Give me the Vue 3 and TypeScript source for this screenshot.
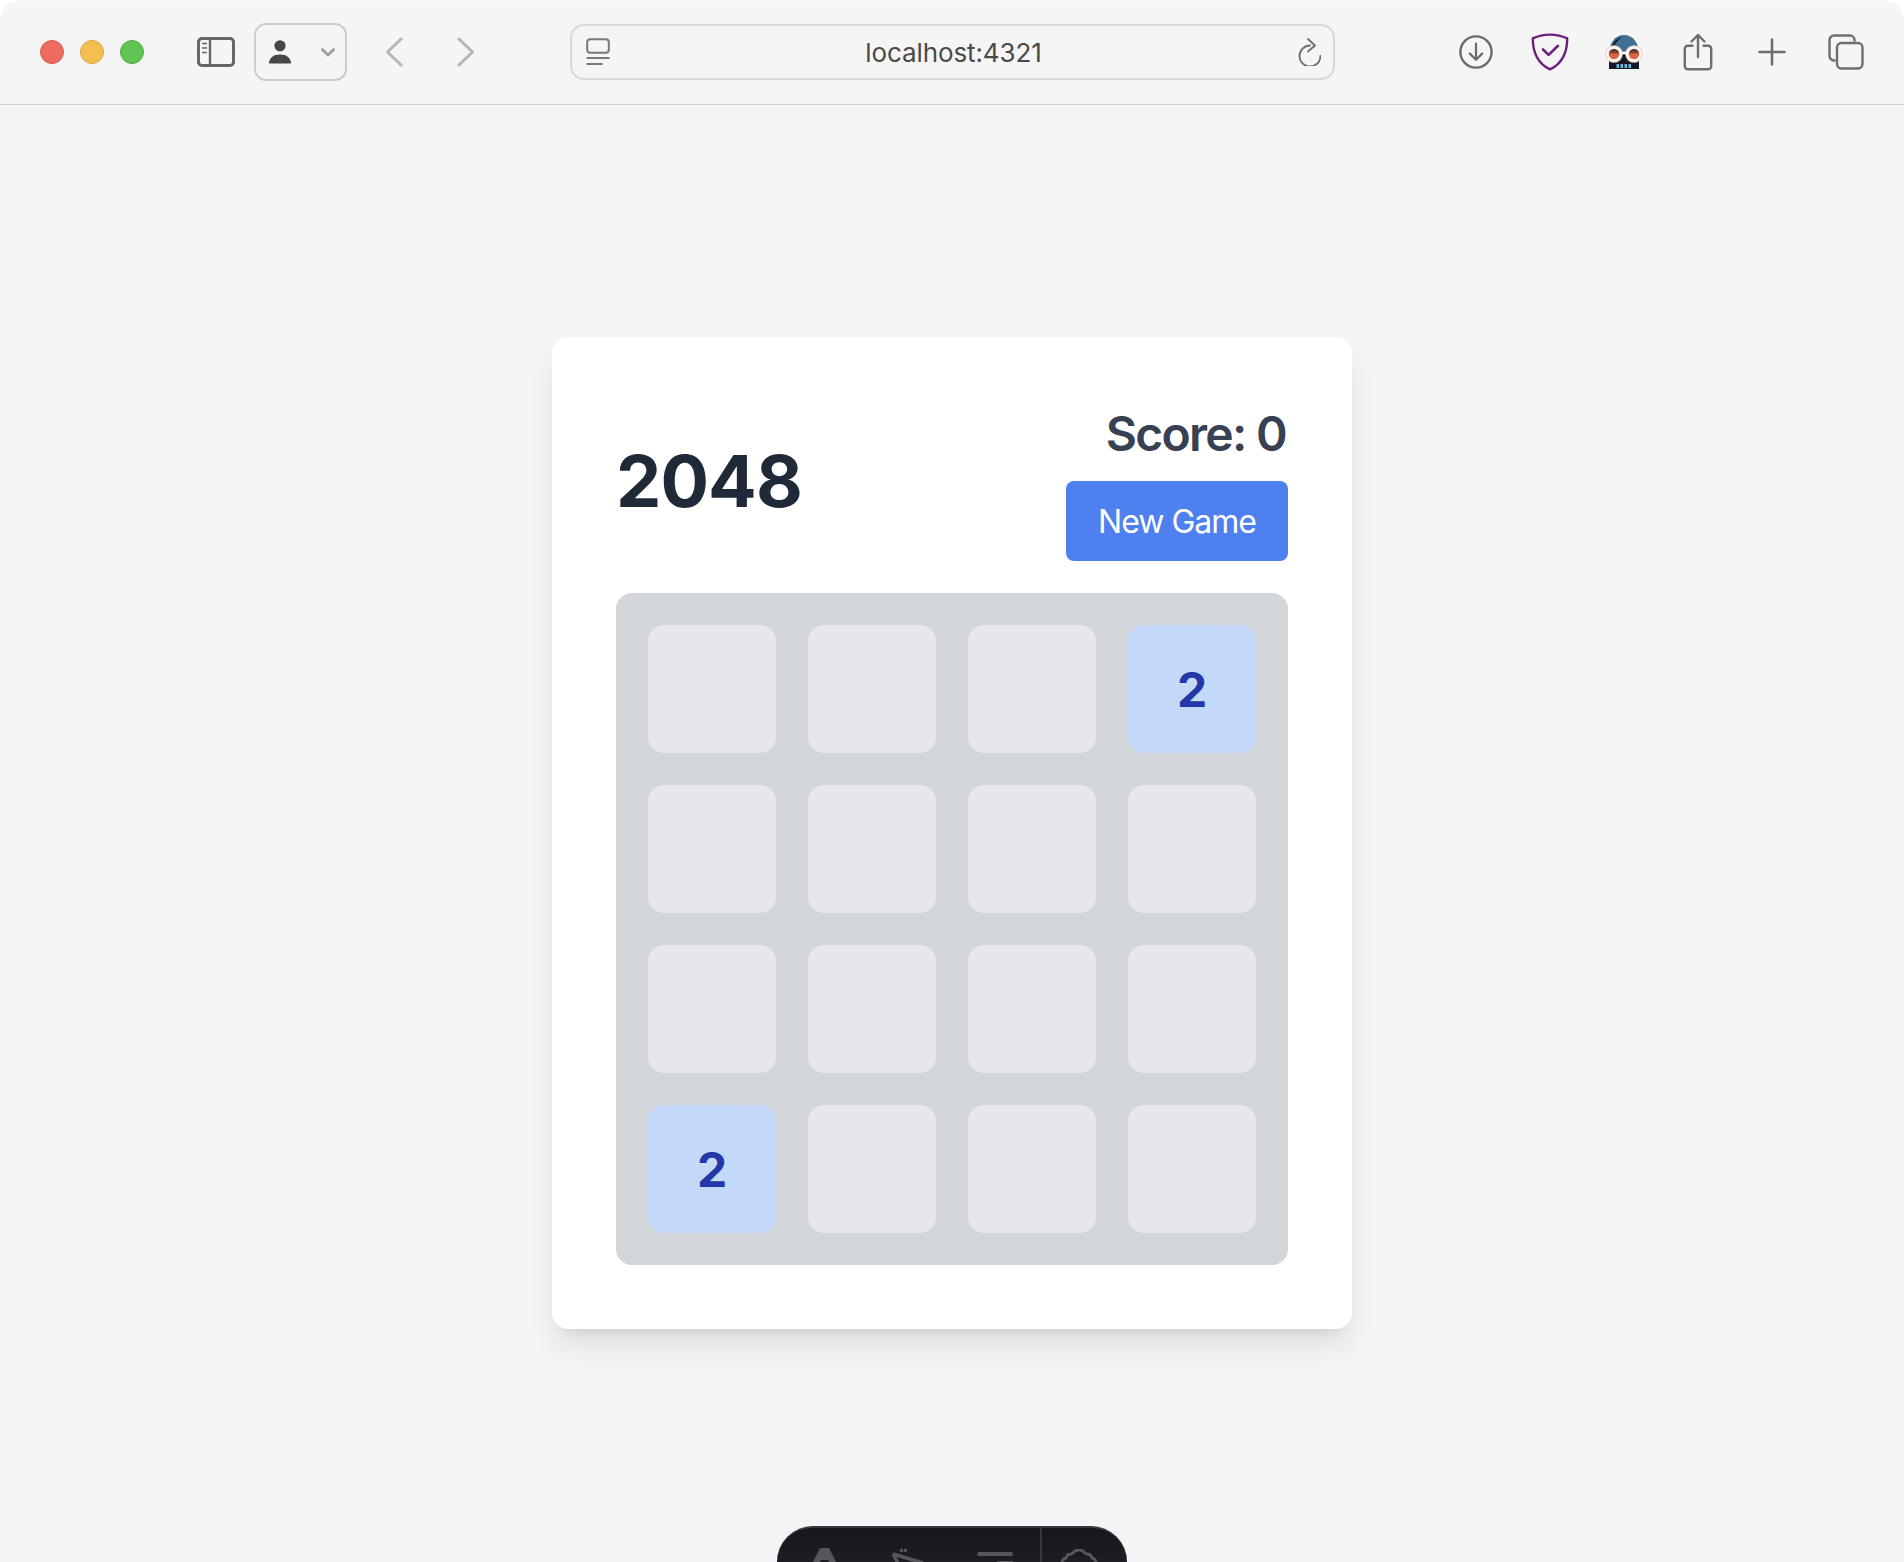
<template>
  <div class="window">
    <header class="toolbar">
      <div class="lights">
        <span class="light light--red" />
        <span class="light light--yellow" />
        <span class="light light--green" />
      </div>

      <svg class="sidebar-icon" width="38" height="30" viewBox="0 0 38 30" fill="none">
        <rect x="1.5" y="1.5" width="35" height="27" rx="3.5" stroke="#666" stroke-width="3" />
        <path d="M13 1v28" stroke="#666" stroke-width="2.4" />
        <path d="M5 6.5h5M5 11h5M5 15.5h5" stroke="#666" stroke-width="1.6" />
      </svg>

      <div class="profile">
        <svg width="22" height="24" viewBox="0 0 22 24" fill="#464646">
          <circle cx="11" cy="5.8" r="5.6" />
          <path d="M0 23.5c0-5.6 4.4-9 11-9s11 3.4 11 9z" />
        </svg>
        <svg width="14" height="9" viewBox="0 0 14 9" fill="none">
          <path d="M1.5 1.7 7 7l5.5-5.3" stroke="#a3a3a3" stroke-width="3" stroke-linecap="round" stroke-linejoin="round" />
        </svg>
      </div>

      <svg class="nav-back" width="18" height="30" viewBox="0 0 18 30" fill="none">
        <path d="M16 2 2.5 15 16 28" stroke="#b5b5b5" stroke-width="3" stroke-linecap="round" stroke-linejoin="round" />
      </svg>
      <svg class="nav-forward" width="18" height="30" viewBox="0 0 18 30" fill="none">
        <path d="M2 2l13.5 13L2 28" stroke="#b5b5b5" stroke-width="3" stroke-linecap="round" stroke-linejoin="round" />
      </svg>

      <div class="address">
        <svg width="24" height="28" viewBox="0 0 24 28" fill="none">
          <rect x="1.2" y="1.2" width="21.6" height="13.6" rx="3" stroke="#7a7a7a" stroke-width="2" />
          <path d="M0.5 20h23M0.5 26h16" stroke="#7a7a7a" stroke-width="2" />
        </svg>
        <span class="address__url">localhost:4321</span>
        <svg width="24" height="28" viewBox="0 0 24 28" fill="none">
          <path d="M13 7.5A10.5 10.5 0 1 0 23.5 18" stroke="#6e6e6e" stroke-width="1.8" stroke-linecap="round" />
          <path d="M11 1l7 6.5-7 6" stroke="#6e6e6e" stroke-width="1.8" stroke-linecap="round" stroke-linejoin="round" />
        </svg>
      </div>

      <div class="actions">
        <svg width="34" height="34" viewBox="0 0 34 34" fill="none">
          <circle cx="17" cy="17" r="15.6" stroke="#6b6b6b" stroke-width="2.4" />
          <path d="M17 8.5v16M10.8 18.6 17 24.8l6.2-6.2" stroke="#6b6b6b" stroke-width="2.2" stroke-linecap="round" stroke-linejoin="round" />
        </svg>

        <svg width="38" height="38" viewBox="0 0 38 38" fill="none">
          <path d="M19 1.6C12.8 1.6 6.8 3 1.8 5.4c0 14.4 5 25 17.2 31 12.2-6 17.2-16.6 17.2-31C31.2 3 25.2 1.6 19 1.6z" stroke="#6d1f7c" stroke-width="2.4" stroke-linejoin="round" />
          <path d="M12 16.5l5.6 5.4L27 12.8" stroke="#6d1f7c" stroke-width="2.6" stroke-linecap="round" stroke-linejoin="round" />
        </svg>

        <svg width="38" height="36" viewBox="0 0 38 36" fill="none">
          <defs>
            <linearGradient id="lens" x1="0" y1="0" x2="0" y2="1">
              <stop offset="0.3" stop-color="#6b3a2c" />
              <stop offset="0.55" stop-color="#dd6440" />
            </linearGradient>
          </defs>
          <path d="M4 20C4 9 10 1 19 1s15 8 15 19z" fill="#3f6f94" />
          <path d="M9 13c1.6-4 4-7.5 8-10-4.5 1-8.5 4.5-10 10z" fill="#15191f" />
          <rect x="4" y="20" width="30" height="15" fill="#15191f" />
          <rect x="11.5" y="30" width="2.5" height="4" fill="#6fb6e0" />
          <rect x="15.5" y="30" width="2.5" height="4" fill="#6fb6e0" />
          <rect x="19.5" y="30" width="2.5" height="4" fill="#6fb6e0" />
          <rect x="23.5" y="30" width="2.5" height="4" fill="#6fb6e0" />
          <circle cx="9" cy="20" r="8.8" fill="#f3cfc4" />
          <circle cx="29" cy="20" r="8.8" fill="#f3cfc4" />
          <path d="M14 19h10" stroke="#fff" stroke-width="2.5" />
          <circle cx="9" cy="20" r="6.5" fill="url(#lens)" stroke="#fff" stroke-width="2.4" />
          <circle cx="29" cy="20" r="6.5" fill="url(#lens)" stroke="#fff" stroke-width="2.4" />
        </svg>

        <svg width="30" height="38" viewBox="0 0 30 38" fill="none">
          <path d="M9.5 12.8H4.8a3 3 0 0 0-3 3v17.4a3 3 0 0 0 3 3h20.4a3 3 0 0 0 3-3V15.8a3 3 0 0 0-3-3h-4.7" stroke="#6e6e6e" stroke-width="2.4" stroke-linecap="round" />
          <path d="M15 24V2.5M8.5 8.5 15 2l6.5 6.5" stroke="#6e6e6e" stroke-width="2.4" stroke-linecap="round" stroke-linejoin="round" />
        </svg>

        <svg width="28" height="28" viewBox="0 0 28 28" fill="none">
          <path d="M14 1.5v25M1.5 14h25" stroke="#6e6e6e" stroke-width="2.6" stroke-linecap="round" />
        </svg>

        <svg width="36" height="36" viewBox="0 0 36 36" fill="none">
          <path d="M7.5 26.5H6a4.5 4.5 0 0 1-4.5-4.5V6A4.5 4.5 0 0 1 6 1.5h16A4.5 4.5 0 0 1 26.500 6v1.500" stroke="#6e6e6e" stroke-width="2.4" />
          <rect x="9" y="9" width="25.5" height="25.5" rx="4.5" stroke="#6e6e6e" stroke-width="2.4" />
        </svg>
      </div>
    </header>

    <main class="page">
      <section class="game">
        <div class="game__header">
          <h1 class="game__title">2048</h1>
          <div class="game__side">
            <div class="game__score">Score: 0</div>
            <button class="game__button">New Game</button>
          </div>
        </div>

        <div class="board">
          <div
            v-for="(value, index) in cells"
            :key="index"
            class="cell"
            :class="{ 'cell--two': value === 2 }"
          >
            {{ value || '' }}
          </div>
        </div>
      </section>
    </main>

    <div class="devbar">
      <div class="devbar__group">
        <svg width="30" height="16" viewBox="0 0 30 16" fill="#55575c">
          <path d="M10 0h9l8 16h-7l-2-4h-7l-2 4H2z" />
        </svg>
        <svg class="devbar__cone" width="38" height="14" viewBox="0 0 38 14" fill="none">
          <path d="M6 6 36 15" stroke="#55575c" stroke-width="3.5" />
          <path d="M6 6 11 15" stroke="#55575c" stroke-width="3.5" />
          <path d="M14 1l1 3M19 1l-1 3" stroke="#55575c" stroke-width="3" />
        </svg>
        <svg class="devbar__lines" width="38" height="10" viewBox="0 0 38 10" fill="#55575c">
          <rect x="1" y="0" width="36" height="4" rx="2" />
          <rect x="21" y="9" width="16" height="1" />
        </svg>
      </div>
      <span class="devbar__divider" />
      <svg class="devbar__gear" width="38" height="14" viewBox="0 0 38 14" fill="none">
        <path d="M2 14Q2 10 6 9 7 5 11 5L13 4Q15 1 19 1 23 1 25 4L27 5Q31 5 32 9 36 10 36 14" stroke="#55575c" stroke-width="3" stroke-linejoin="round" />
      </svg>
    </div>
  </div>
</template>

<script setup lang="ts">
const cells: number[] = [0, 0, 0, 2, 0, 0, 0, 0, 0, 0, 0, 0, 2, 0, 0, 0];
</script>

<style>
html,
body {
  margin: 0;
  background: #f3f4f6;
}
</style>

<style scoped>
.window {
  position: relative;
  display: flex;
  flex-direction: column;
  height: 1562px;
  overflow: hidden;
  background: #fff;
  font-family: Inter, "Liberation Sans", sans-serif;
}

.toolbar {
  flex-shrink: 0;
  display: flex;
  align-items: center;
  box-sizing: border-box;
  height: 105px;
  padding-left: 40px;
  background: #f5f5f5;
  border-bottom: 1px solid #d0d0d0;
  border-radius: 20px 20px 0 0;
  box-shadow: inset 0 1px 0 #fbfbfb;
}

.lights {
  display: flex;
  gap: 16px;
}

.light {
  width: 24px;
  height: 24px;
  box-sizing: border-box;
  border-radius: 50%;
  border: 1px solid transparent;
}

.light--red {
  background: #ec6a5e;
  border-color: #d65a4f;
}

.light--yellow {
  background: #f5bf4f;
  border-color: #d9a441;
}

.light--green {
  background: #61c554;
  border-color: #52a945;
}

.sidebar-icon {
  margin-left: 53px;
}

.profile {
  display: flex;
  align-items: center;
  justify-content: space-between;
  box-sizing: border-box;
  width: 93px;
  height: 58px;
  margin-left: 19px;
  padding: 0 10px 0 13px;
  border: 2px solid #cdcdcd;
  border-radius: 12px;
}

.nav-back {
  margin-left: 38px;
}

.nav-forward {
  margin-left: 54px;
}

.address {
  display: flex;
  align-items: center;
  justify-content: space-between;
  box-sizing: border-box;
  width: 765px;
  height: 56px;
  margin-left: 95px;
  padding: 0 12px 0 14px;
  border: 2px solid #d8d8d8;
  border-radius: 14px;
}

.address__url {
  padding-top: 1px;
  font-size: 26px;
  letter-spacing: -0.1px;
  color: #4a4a4a;
}

.actions {
  display: grid;
  grid-auto-flow: column;
  grid-auto-columns: 74px;
  align-items: center;
  justify-items: center;
  margin-left: 104px;
}

.page {
  flex: 1;
  display: flex;
  align-items: center;
  justify-content: center;
  padding-bottom: 1px;
  background: #f3f4f6;
}

.game {
  padding: 64px;
  background: #fff;
  border-radius: 16px;
  box-shadow: 0 20px 30px -6px rgba(0, 0, 0, 0.1), 0 8px 12px -8px rgba(0, 0, 0, 0.1);
}

.game__header {
  display: flex;
  align-items: center;
  justify-content: space-between;
  margin-bottom: 32px;
}

.game__title {
  margin: 0;
  font-size: 72px;
  line-height: 80px;
  font-weight: 700;
  letter-spacing: -0.9px;
  color: #1f2937;
}

.game__side {
  display: flex;
  flex-direction: column;
  align-items: flex-end;
  gap: 16px;
}

.game__score {
  padding: 2px 2px 0 0;
  font-size: 48px;
  line-height: 62px;
  font-weight: 600;
  letter-spacing: -1.7px;
  color: #374151;
}

.game__button {
  box-sizing: border-box;
  height: 80px;
  padding: 2px 32px 0;
  border: none;
  border-radius: 8px;
  background: #4f80ef;
  color: #fff;
  font-family: inherit;
  font-size: 32px;
  line-height: 48px;
  letter-spacing: -1px;
}

.board {
  display: grid;
  grid-template-columns: repeat(4, 128px);
  gap: 32px;
  padding: 32px;
  background: #d2d5d9;
  border-radius: 16px;
}

.cell {
  display: flex;
  align-items: center;
  justify-content: center;
  height: 128px;
  border-radius: 16px;
  background: #e5e7eb;
  font-size: 48px;
  font-weight: 700;
}

.cell--two {
  background: #c4d9f9;
  color: #2338a8;
}

/* dev toolbar, cut off by the bottom of the window */
.devbar {
  position: absolute;
  left: 777px;
  bottom: 0;
  display: flex;
  align-items: flex-start;
  box-sizing: border-box;
  width: 350px;
  height: 36px;
  overflow: hidden;
  border-top: 2px solid #343841;
  border-radius: 38px 38px 0 0;
  background: linear-gradient(180deg, #15171c, #1c1e24);
}

.devbar__group {
  display: flex;
  align-items: flex-start;
  width: 263px;
  padding: 20px 0 0 33px;
  box-sizing: border-box;
}

.devbar__cone {
  margin-left: 47px;
}

.devbar__lines {
  margin: 4px 0 0 51px;
}

.devbar__divider {
  width: 2px;
  height: 36px;
  background: #343841;
}

.devbar__gear {
  margin: 21px 0 0 18px;
}
</style>
